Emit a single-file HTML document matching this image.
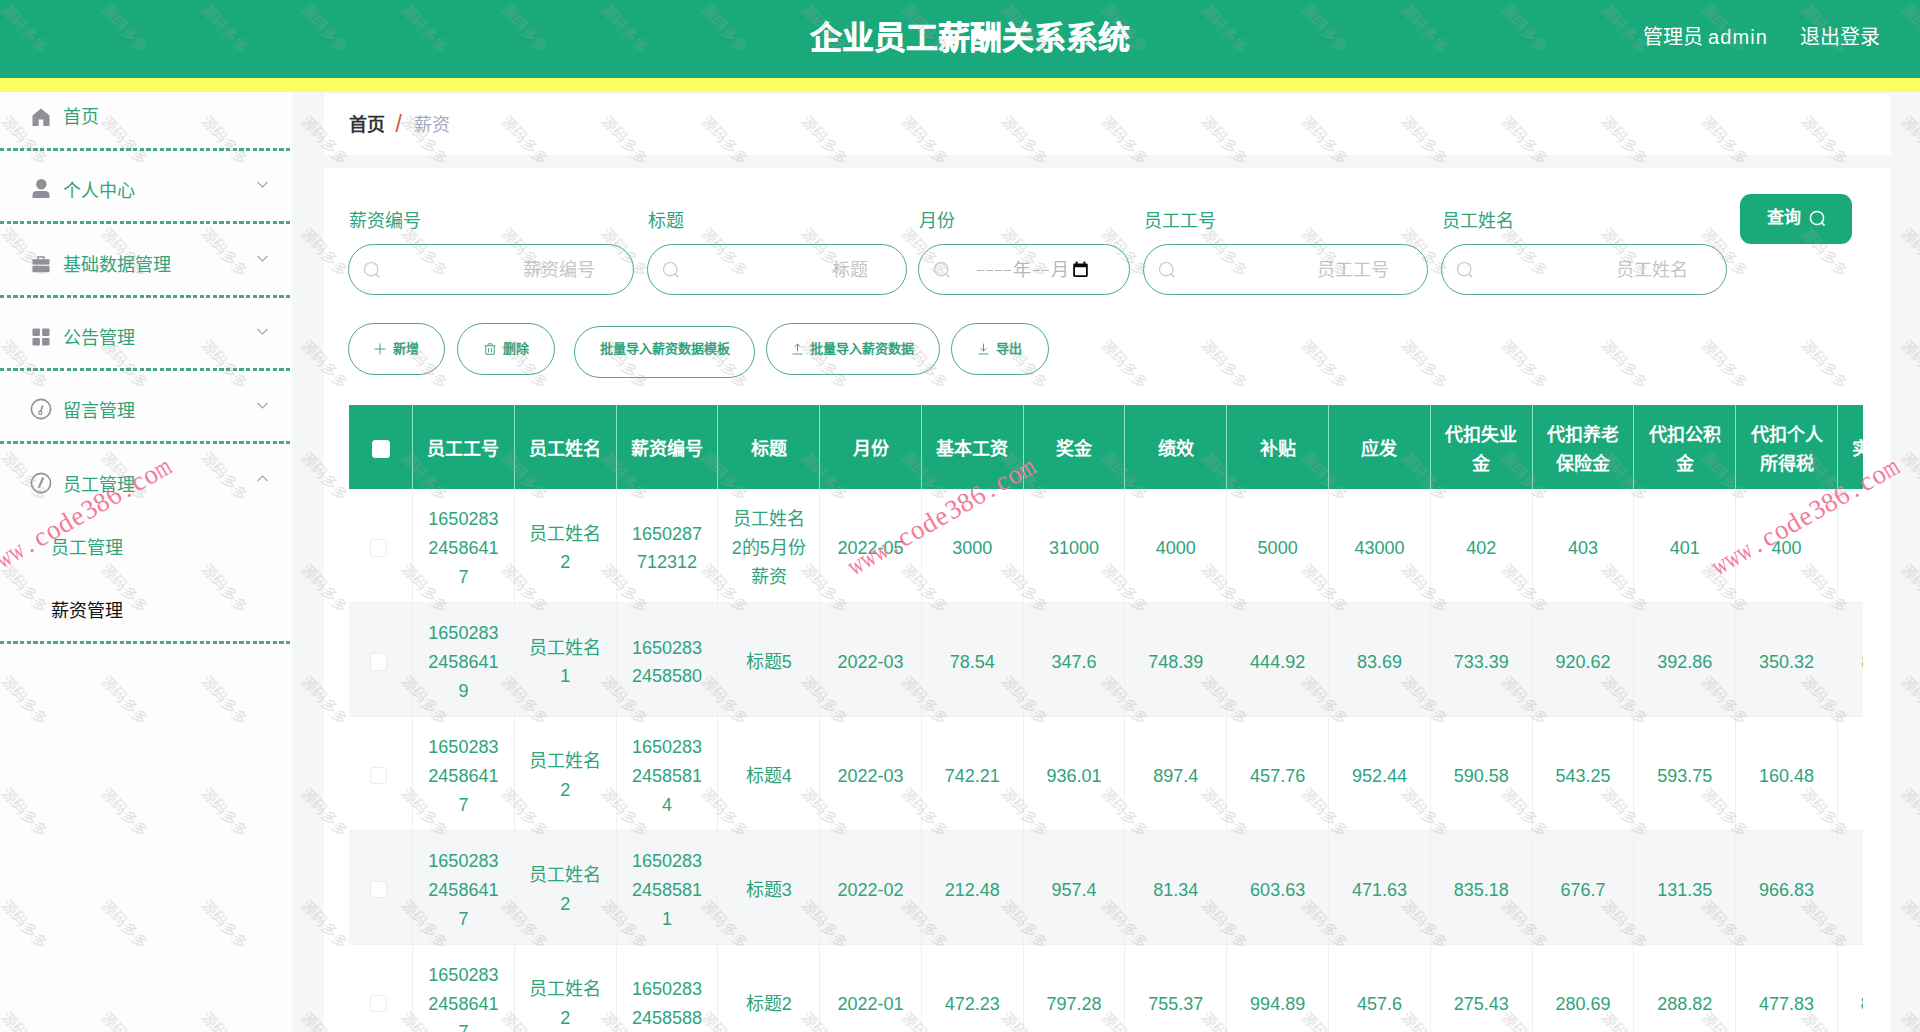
<!DOCTYPE html>
<html lang="zh-CN">
<head>
<meta charset="utf-8">
<title>企业员工薪酬关系系统</title>
<style>
*{box-sizing:border-box;margin:0;padding:0}
html,body{width:1920px;height:1032px;overflow:hidden}
body{font-family:"Liberation Sans",sans-serif;background:#f5f6f8;position:relative;color:#2fa37c}
.abs{position:absolute}
/* header */
#hd{position:absolute;left:0;top:0;width:1920px;height:92px;background:#19a97b;border-bottom:14px solid #fcfd60;color:#fff;z-index:5}
#hd .title{position:absolute;left:0;width:1940px;top:14.5px;-webkit-text-stroke:0.5px #fff;text-align:center;font-size:32px;font-weight:bold;line-height:46px;letter-spacing:0}
#hd .user{position:absolute;top:23px;left:1642.5px;font-size:20px;line-height:28px;white-space:nowrap}
#hd .out{position:absolute;top:23px;left:1800px;font-size:20px;line-height:28px;white-space:nowrap}
/* sidebar */
#sb{position:absolute;left:0;top:92px;width:292px;height:940px;background:#fdfdfd}
.mi{position:absolute;left:0;width:292px;height:30px;font-size:18px;line-height:30px;color:#2fa37c;white-space:nowrap}
.mi .tx{position:absolute;left:63px;top:1.5px}
.mi svg.ic{position:absolute;left:32px;top:7px;width:18px;height:18px}
.mi svg.ar{position:absolute;left:256px;top:4px;width:13px;height:13px}
.dash{position:absolute;left:0;width:292px;height:3px;background:repeating-linear-gradient(90deg,#45a68a 0,#45a68a 4.3px,transparent 4.3px,transparent 6.65px)}
.sub{position:absolute;left:51px;font-size:18px;line-height:30px;white-space:nowrap}
/* cards */
#bc{position:absolute;left:324px;top:94px;width:1566px;height:61px;background:#fff}
#bc span{position:absolute;top:15.7px;font-size:18px;line-height:30px;white-space:nowrap}
#main{position:absolute;left:324px;top:168px;width:1566px;height:864px;background:#fff;overflow:hidden}

/* form (coordinates relative to #main: left 324, top 168) */
.lb{position:absolute;top:37.5px;font-size:18px;line-height:30px;color:#2fa37c;white-space:nowrap}
.inp{position:absolute;top:76px;height:51px;border:1px solid #4ea693;border-radius:26px;background:#fff}
.inp svg.s{position:absolute;left:14px;top:16px;width:18px;height:18px}
.inp .ph{position:absolute;right:38px;top:10px;font-size:18px;line-height:30px;color:#c3c6cd;white-space:nowrap}
.btn{position:absolute;top:155px;height:52px;border:1px solid #4ea693;border-radius:26px;background:#fff;font-size:13px;font-weight:bold;color:#2fa37c;line-height:50px;white-space:nowrap;text-align:center}
.btn svg{display:inline-block;vertical-align:middle;margin-right:7px;position:relative;top:-1px}
#q{position:absolute;left:1416px;top:26px;width:112px;height:50px;border-radius:11px;background:#19a97b;color:#fff;font-size:17px;font-weight:bold;line-height:50px;white-space:nowrap}
#q span{position:absolute;left:27px;top:-1px}
#q svg{position:absolute;left:69px;top:16px;width:17px;height:17px}

.ph i{display:inline-block;height:1.2px;background:repeating-linear-gradient(90deg,#b0b3bb 0,#b0b3bb 7.4px,transparent 7.4px,transparent 8.9px);vertical-align:middle;position:relative;top:-1px;margin:0 2px}
.ph i.d4{width:34.1px}.ph i.d2{width:16.3px}

/* table: abs page coords x 349..1863, y 405.. ; relative to #main subtract (324,168) */
#tb{position:absolute;left:25px;top:237px;width:1514px;height:640px;overflow:hidden}
.tr{display:flex;width:1700px;height:113.9px}
.tr.h{height:84px;background:#19a97b;color:#fff;font-weight:bold}
.tr.g{background:#f5f6f7}
.tr>div{flex:0 0 101.79px;border-right:1px solid #eef0f3;border-bottom:1px solid #eff1f4;display:flex;align-items:center;justify-content:center;text-align:center;font-size:18px;line-height:28.8px;white-space:nowrap;padding-top:6px}
.tr>div:first-child{flex-basis:64px;padding-top:0}
.tr.h>div{border-right:1px solid #86e3c3;border-bottom:none;line-height:29.4px}
.ck{width:17.5px;height:17.5px;border:1px solid #eaecf0;border-radius:3px;background:#fff;position:relative;left:-2px;top:2.5px}
.tr.h .ck{width:18px;height:18px;border:none;border-radius:3.5px;left:0.5px;top:2px}

/* watermarks */
#wm{position:absolute;left:0;top:0;width:1920px;height:1032px;z-index:20;pointer-events:none}
.pk{position:absolute;z-index:21;font-family:"Liberation Serif",serif;font-size:27px;line-height:30px;color:#f27b9b;white-space:nowrap;transform-origin:0 100%;transform:rotate(-29.6deg);pointer-events:none}
.pk b{display:inline-block;width:14px;text-align:center;font-weight:normal}
.pk b.n{transform:scaleX(0.72);width:14px;text-indent:-3px}
</style>
</head>
<body>
<div id="hd">
  <div class="title">企业员工薪酬关系系统</div>
  <div class="user">管理员 <span style="letter-spacing:1.1px">admin</span></div>
  <div class="out">退出登录</div>
</div>
<div id="sb">
<div class="mi" style="top:9px"><svg class="ic" viewBox="0 0 18 18"><path d="M9 0.5 L17.5 7.5 L17.5 18 L11.3 18 L11.3 11.6 L6.7 11.6 L6.7 18 L0.5 18 L0.5 7.5 Z" fill="#8f9097"/></svg><span class="tx" style="top:0.5px">首页</span></div>
<div class="mi" style="top:82px"><svg class="ic" viewBox="0 0 18 19" style="height:19px;top:5px"><circle cx="9.3" cy="5.3" r="5.2" fill="#8f9097"/><path d="M0.5 19 L0.5 16 Q0.5 12 5 12 L13 12 Q17.5 12 17.5 16 L17.5 19 Z" fill="#8f9097"/></svg><span class="tx">个人中心</span><svg class="ar" viewBox="0 0 13 13"><path d="M1.5 4 L6.5 9 L11.5 4" fill="none" stroke="#a4a7ad" stroke-width="1.2"/></svg></div>
<div class="mi" style="top:156px"><svg class="ic" viewBox="0 0 18 18"><path d="M5.2 4.2 L5.2 1.2 L12.8 1.2 L12.8 4.2 L11.2 4.2 L11.2 2.8 L6.8 2.8 L6.8 4.2 Z" fill="#8f9097"/><rect x="0.5" y="4.2" width="17" height="5.4" fill="#8f9097"/><rect x="0.5" y="10.8" width="17" height="6.4" fill="#8f9097"/></svg><span class="tx">基础数据管理</span><svg class="ar" viewBox="0 0 13 13"><path d="M1.5 4 L6.5 9 L11.5 4" fill="none" stroke="#a4a7ad" stroke-width="1.2"/></svg></div>
<div class="mi" style="top:229px"><svg class="ic" viewBox="0 0 18 18"><rect x="0.5" y="0.5" width="7.4" height="7.4" rx="1" fill="#8f9097"/><rect x="10.1" y="0.5" width="7.4" height="7.4" rx="1" fill="#8f9097"/><rect x="0.5" y="10.1" width="7.4" height="7.4" rx="1" fill="#8f9097"/><rect x="10.1" y="10.1" width="7.4" height="7.4" rx="1" fill="#8f9097"/></svg><span class="tx">公告管理</span><svg class="ar" viewBox="0 0 13 13"><path d="M1.5 4 L6.5 9 L11.5 4" fill="none" stroke="#a4a7ad" stroke-width="1.2"/></svg></div>
<div class="mi" style="top:302.5px"><svg class="ic" viewBox="0 0 22 22" style="width:22px;height:22px;left:30px;top:3px"><circle cx="11" cy="11" r="9.6" fill="none" stroke="#8f9097" stroke-width="1.6"/><path d="M10.6 14 L12.6 7.4" stroke="#8f9097" stroke-width="1.6" fill="none"/><circle cx="10.3" cy="14.8" r="1.6" fill="none" stroke="#8f9097" stroke-width="1.2"/></svg><span class="tx">留言管理</span><svg class="ar" viewBox="0 0 13 13"><path d="M1.5 4 L6.5 9 L11.5 4" fill="none" stroke="#a4a7ad" stroke-width="1.2"/></svg></div>
<div class="mi" style="top:376px"><svg class="ic" viewBox="0 0 22 22" style="width:22px;height:22px;left:30px;top:4px"><circle cx="11" cy="11" r="9.6" fill="none" stroke="#8f9097" stroke-width="1.6"/><path d="M8.2 15.6 L12.4 5.6 L13.8 6.2 L9.6 15.2 Z" fill="#8f9097" stroke="#8f9097" stroke-width="0.8" stroke-linejoin="round"/></svg><span class="tx">员工管理</span><svg class="ar" viewBox="0 0 13 13"><path d="M1.5 9 L6.5 4 L11.5 9" fill="none" stroke="#a4a7ad" stroke-width="1.2"/></svg></div>
<div class="dash" style="top:56px"></div>
<div class="dash" style="top:129px"></div>
<div class="dash" style="top:203px"></div>
<div class="dash" style="top:276px"></div>
<div class="dash" style="top:349px"></div>
<div class="dash" style="top:549px"></div>
<div class="sub" style="top:440.5px">员工管理</div>
<div class="sub" style="top:504px;color:#111">薪资管理</div>
</div>
<div id="bc">
  <span style="left:25px;color:#303133;font-weight:bold">首页</span>
  <span style="left:71.5px;top:14.5px;font-size:23px;color:#e0523a">/</span>
  <span style="left:90px;color:#a3abbd">薪资</span>
</div>
<div id="main">
<div class="lb" style="left:25px">薪资编号</div>
<div class="lb" style="left:324px">标题</div>
<div class="lb" style="left:595px">月份</div>
<div class="lb" style="left:820px">员工工号</div>
<div class="lb" style="left:1118px">员工姓名</div>
<div class="inp" style="left:24px;width:286px"><svg class="s" viewBox="0 0 18 18"><circle cx="8.2" cy="8.2" r="6.7" fill="none" stroke="#c3c6cd" stroke-width="1.2"/><path d="M13 13 L16.2 16.2" stroke="#c3c6cd" stroke-width="1.4" fill="none"/></svg><span class="ph">薪资编号</span></div>
<div class="inp" style="left:323px;width:260px"><svg class="s" viewBox="0 0 18 18"><circle cx="8.2" cy="8.2" r="6.7" fill="none" stroke="#c3c6cd" stroke-width="1.2"/><path d="M13 13 L16.2 16.2" stroke="#c3c6cd" stroke-width="1.4" fill="none"/></svg><span class="ph">标题</span></div>
<div class="inp" style="left:594px;width:212px"><svg class="s" viewBox="0 0 18 18"><circle cx="8.2" cy="8.2" r="6.7" fill="none" stroke="#c3c6cd" stroke-width="1.2"/><path d="M13 13 L16.2 16.2" stroke="#c3c6cd" stroke-width="1.4" fill="none"/></svg><span class="ph" style="right:auto;left:56px;color:#b4b7bf"><i class="d4"></i>年<i class="d2"></i>月</span><svg style="position:absolute;left:153px;top:16px;width:17px;height:17px" viewBox="0 0 17 17"><path d="M2.6 2.4 H14.4 Q15.8 2.4 15.8 3.8 V14.6 Q15.8 16 14.4 16 H2.6 Q1.2 16 1.2 14.6 V3.8 Q1.2 2.4 2.6 2.4 Z M3 6.3 V14.2 H14 V6.3 Z" fill="#0a0a0a" fill-rule="evenodd"/><rect x="3.6" y="0.6" width="2" height="3" fill="#0a0a0a"/><rect x="11.4" y="0.6" width="2" height="3" fill="#0a0a0a"/></svg></div>
<div class="inp" style="left:819px;width:285px"><svg class="s" viewBox="0 0 18 18"><circle cx="8.2" cy="8.2" r="6.7" fill="none" stroke="#c3c6cd" stroke-width="1.2"/><path d="M13 13 L16.2 16.2" stroke="#c3c6cd" stroke-width="1.4" fill="none"/></svg><span class="ph">员工工号</span></div>
<div class="inp" style="left:1117px;width:286px"><svg class="s" viewBox="0 0 18 18"><circle cx="8.2" cy="8.2" r="6.7" fill="none" stroke="#c3c6cd" stroke-width="1.2"/><path d="M13 13 L16.2 16.2" stroke="#c3c6cd" stroke-width="1.4" fill="none"/></svg><span class="ph">员工姓名</span></div>
<div id="q"><span>查询</span><svg viewBox="0 0 17 17"><circle cx="8" cy="8" r="6.6" fill="none" stroke="#fff" stroke-width="1.5"/><path d="M12.8 12.8 L15.6 15.6" stroke="#fff" stroke-width="1.7"/></svg></div>
<div class="btn" style="left:24px;width:97px;top:155px"><svg width="12" height="12" viewBox="0 0 12 12"><path d="M6 0.5 V11.5 M0.5 6 H11.5" stroke="#4f9f8d" stroke-width="1" fill="none"/></svg>新增</div>
<div class="btn" style="left:133px;width:98px;top:155px"><svg width="12" height="12" viewBox="0 0 12 12"><path d="M0.5 2.8 H11.5 M4 2.8 V0.8 H8 V2.8 M1.8 2.8 V11.3 H10.2 V2.8 M4.6 5 V9.4 M7.4 5 V9.4" stroke="#4f9f8d" stroke-width="1" fill="none"/></svg>删除</div>
<div class="btn" style="left:250px;width:181px;top:158px;line-height:44px">批量导入薪资数据模板</div>
<div class="btn" style="left:442px;width:174px;top:155px"><svg width="11" height="12" viewBox="0 0 11 12"><path d="M5.5 1 V8.4 M2.6 3.8 L5.5 1 L8.4 3.8 M0.5 11 H10.5" stroke="#4f9f8d" stroke-width="1" fill="none"/></svg>批量导入薪资数据</div>
<div class="btn" style="left:627px;width:98px;top:155px"><svg width="11" height="12" viewBox="0 0 11 12"><path d="M5.5 0.6 V8 M2.6 5.2 L5.5 8 L8.4 5.2 M0.5 11 H10.5" stroke="#4f9f8d" stroke-width="1" fill="none"/></svg>导出</div>
<div id="tb">
<div class="tr h"><div><span class="ck"></span></div><div>员工工号</div><div>员工姓名</div><div>薪资编号</div><div>标题</div><div>月份</div><div>基本工资</div><div>奖金</div><div>绩效</div><div>补贴</div><div>应发</div><div>代扣失业<br>金</div><div>代扣养老<br>保险金</div><div>代扣公积<br>金</div><div>代扣个人<br>所得税</div><div>实发工资</div></div>
<div class="tr"><div><span class="ck"></span></div><div>1650283<br>2458641<br>7</div><div>员工姓名<br>2</div><div>1650287<br>712312</div><div>员工姓名<br>2的5月份<br>薪资</div><div>2022-05</div><div>3000</div><div>31000</div><div>4000</div><div>5000</div><div>43000</div><div>402</div><div>403</div><div>401</div><div>400</div><div>4139</div></div>
<div class="tr g"><div><span class="ck"></span></div><div>1650283<br>2458641<br>9</div><div>员工姓名<br>1</div><div>1650283<br>2458580</div><div>标题5</div><div>2022-03</div><div>78.54</div><div>347.6</div><div>748.39</div><div>444.92</div><div>83.69</div><div>733.39</div><div>920.62</div><div>392.86</div><div>350.32</div><div>835.11</div></div>
<div class="tr"><div><span class="ck"></span></div><div>1650283<br>2458641<br>7</div><div>员工姓名<br>2</div><div>1650283<br>2458581<br>4</div><div>标题4</div><div>2022-03</div><div>742.21</div><div>936.01</div><div>897.4</div><div>457.76</div><div>952.44</div><div>590.58</div><div>543.25</div><div>593.75</div><div>160.48</div><div>73.9</div></div>
<div class="tr g"><div><span class="ck"></span></div><div>1650283<br>2458641<br>7</div><div>员工姓名<br>2</div><div>1650283<br>2458581<br>1</div><div>标题3</div><div>2022-02</div><div>212.48</div><div>957.4</div><div>81.34</div><div>603.63</div><div>471.63</div><div>835.18</div><div>676.7</div><div>131.35</div><div>966.83</div><div>62.4</div></div>
<div class="tr"><div><span class="ck"></span></div><div>1650283<br>2458641<br>7</div><div>员工姓名<br>2</div><div>1650283<br>2458588</div><div>标题2</div><div>2022-01</div><div>472.23</div><div>797.28</div><div>755.37</div><div>994.89</div><div>457.6</div><div>275.43</div><div>280.69</div><div>288.82</div><div>477.83</div><div>812.16</div></div>
</div>
</div>
<svg id="wm" width="1920" height="1032" viewBox="0 0 1920 1032">
<defs><pattern id="wp" x="-25.5" y="-28" width="100" height="112" patternUnits="userSpaceOnUse">
<text x="50" y="61.5" text-anchor="middle" font-size="15" font-family="Liberation Sans, sans-serif" fill="#a0a0a0" fill-opacity="0.36" transform="rotate(47 50 56)">源码多多</text>
</pattern></defs>
<rect x="0" y="0" width="1920" height="1032" fill="url(#wp)"/>
</svg>
<div class="pk" style="left:-6.7px;top:550.5px"><b class="n">w</b><b class="n">w</b><b class="n">w</b><b>.</b><b>c</b><b>o</b><b>d</b><b>e</b><b>3</b><b>8</b><b>6</b><b>.</b><b>c</b><b>o</b><b class="n">m</b></div>
<div class="pk" style="left:857.3px;top:550.5px"><b class="n">w</b><b class="n">w</b><b class="n">w</b><b>.</b><b>c</b><b>o</b><b>d</b><b>e</b><b>3</b><b>8</b><b>6</b><b>.</b><b>c</b><b>o</b><b class="n">m</b></div>
<div class="pk" style="left:1721.3px;top:550.5px"><b class="n">w</b><b class="n">w</b><b class="n">w</b><b>.</b><b>c</b><b>o</b><b>d</b><b>e</b><b>3</b><b>8</b><b>6</b><b>.</b><b>c</b><b>o</b><b class="n">m</b></div>
</body>
</html>
